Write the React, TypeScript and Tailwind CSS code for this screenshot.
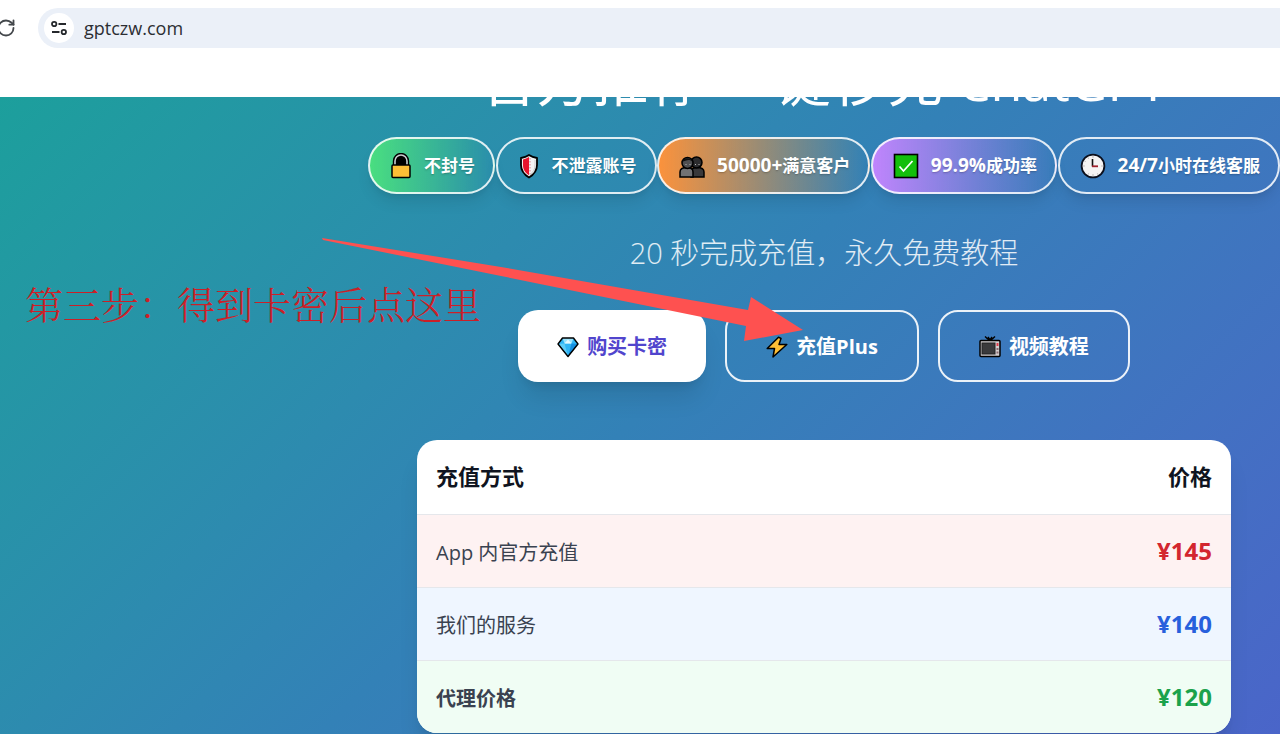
import { RotateCw } from "lucide-react";
import type { ReactNode } from "react";

const LockIcon = () => (
  <svg viewBox="0 0 22 26" className="h-[26px] w-[22px]" aria-hidden="true">
    <path d="M4 12V8a7 7 0 0 1 14 0v4z" fill="#000" stroke="#000" strokeWidth="2.4" />
    <path d="M5 12V8a6 6 0 0 1 12 0v4" fill="none" stroke="#c9cdd0" strokeWidth="1.6" />
    <rect x="2" y="12" width="18" height="12.5" rx="1" fill="#fdbf36" stroke="#000" strokeWidth="1.5" />
  </svg>
);

const ShieldIcon = () => (
  <svg viewBox="0 0 22 26" className="h-[26px] w-[22px]" aria-hidden="true">
    <path d="M11 2c3 2 5 2.500 8 3v7c0 6-3 9.500-8 12.500C6 21.500 3 18 3 12V5c3-.5 5-1 8-3z" fill="#f3f3f3" stroke="#000" strokeWidth="1.800" strokeLinejoin="round" />
    <path d="M11 4c-2 1.300-4 2-6 2.500V12c0 5 2.300 7.800 6 10.200z" fill="#e8152d" />
    <path d="M12 5v17" stroke="#d9828b" strokeWidth="1" strokeDasharray="1.500 1.500" />
    <path d="M17 7v5c0 4-1.500 7-5 9.500" fill="none" stroke="#c9c9c9" strokeWidth="1" />
  </svg>
);

const PeopleIcon = () => (
  <svg viewBox="0 0 26 26" className="size-[26px]" aria-hidden="true">
    <g stroke="#000" strokeWidth="1.500">
      <path d="M12 24v-5c0-3 2-4.500 6-4.500s7 1.500 7 4.500v5z" fill="#39393b" />
      <circle cx="17.500" cy="9.500" r="5.500" fill="#2c2c2e" />
      <path d="M1 24v-5c0-3 2-4.500 7-4.500 4 0 6 1.500 6 4.500v5z" fill="#727274" />
      <circle cx="8.500" cy="10" r="5.500" fill="#4f4f51" />
    </g>
    <path d="M3 9c1-5 9-5 11 0-2-1.500-3-2-4.500-2S5 8 3 9z" fill="#111" />
    <path d="M7 11v1M11 11v1M16.500 11v1M20 11v1" stroke="#bbb" />
  </svg>
);

const CheckIcon = () => (
  <svg viewBox="0 0 26 26" className="size-[26px]" aria-hidden="true">
    <rect x="1.500" y="1.500" width="23" height="23" fill="#13bf0c" stroke="#000" strokeWidth="1.600" />
    <path d="m6.500 13.500 4 4.500 9-10" fill="none" stroke="#fff" strokeWidth="1.800" />
  </svg>
);

const ClockIcon = () => (
  <svg viewBox="0 0 26 26" className="size-[26px]" aria-hidden="true">
    <circle cx="13" cy="13" r="11.400" fill="#f5f3f3" stroke="#0b0f1c" strokeWidth="1.800" />
    <g fill="#b9b5b5">
      <circle cx="13" cy="4" r=".8" />
      <circle cx="22" cy="13" r=".8" />
      <circle cx="13" cy="22" r=".8" />
      <circle cx="4" cy="13" r=".8" />
      <circle cx="17.500" cy="20.800" r=".6" />
      <circle cx="8.500" cy="20.800" r=".6" />
      <circle cx="8.500" cy="5.200" r=".6" />
      <circle cx="5.200" cy="8.500" r=".6" />
    </g>
    <path d="M12.500 6v7.500" stroke="#111" strokeWidth="1.600" />
    <path d="M12 13.300h6" stroke="#a0202c" strokeWidth="1.800" />
  </svg>
);

const GemIcon = () => (
  <svg viewBox="0 0 22 22" className="size-[22px]" aria-hidden="true">
    <path d="M5.500 2h11L21 8 11 20.500 1 8z" fill="#2fb5f5" />
    <path d="M5.500 2h11l-2 5.500h-7z" fill="#9be3fc" />
    <path d="M7.500 7.500 11 3.500l3.500 4z" fill="#e6f9ff" />
    <path d="m1 8 6.500-.5L11 20.500z" fill="#5dcdf9" />
    <path d="m21 8-6.500-.5L11 20.500z" fill="#168fe0" />
    <path d="M5.500 2h11L21 8 11 20.500 1 8z" fill="none" stroke="#000" strokeWidth="1.400" strokeLinejoin="round" />
  </svg>
);

const BoltIcon = () => (
  <svg viewBox="0 0 22 22" className="size-[22px]" aria-hidden="true">
    <path d="M12.500 1.200 1.200 12.500h7.300L7 21 20.800 8.500H13l2-6z" fill="#fdbf36" stroke="#000" strokeWidth="1.500" strokeLinejoin="round" />
  </svg>
);

const TvIcon = () => (
  <svg viewBox="0 0 22 22" className="size-[22px]" aria-hidden="true">
    <path d="m6 .5 5 4.500 5-4.500M9 1l2 3 2-3" fill="none" stroke="#000" strokeWidth="1.400" />
    <rect x="1" y="4.500" width="20" height="16" rx="1" fill="#d3cfd0" stroke="#000" strokeWidth="1.500" />
    <rect x="3" y="7" width="13" height="11" fill="#3a3a3c" stroke="#222" />
    <path d="M18.500 7v3" stroke="#e23a4a" strokeWidth="2" />
    <path d="M18.500 12v2M18.500 15.500v2" stroke="#8a6a70" strokeWidth="2" />
  </svg>
);

type Badge = { icon: ReactNode; latin?: string; text: string; tint: string };

const badges: Badge[] = [
  { icon: <LockIcon />, text: "不封号", tint: "bg-linear-to-r from-[#4ade80] to-transparent" },
  { icon: <ShieldIcon />, text: "不泄露账号", tint: "" },
  { icon: <PeopleIcon />, latin: "50000+", text: "满意客户", tint: "bg-linear-to-r from-[#fb923c] to-transparent" },
  { icon: <CheckIcon />, latin: "99.9%", text: "成功率", tint: "bg-linear-to-r from-[#c084fc] to-transparent" },
  { icon: <ClockIcon />, latin: "24/7", text: "小时在线客服", tint: "" },
];

const prices = [
  { name: "App 内官方充值", price: "¥145", row: "bg-[#fef2f2]", label: "font-normal", color: "text-[#d3262f]" },
  { name: "我们的服务", price: "¥140", row: "bg-[#eff6ff]", label: "font-normal", color: "text-[#2760dc]" },
  { name: "代理价格", price: "¥120", row: "bg-[#f0fdf4]", label: "font-bold", color: "text-[#1ba24b]" },
];

const AddressBar = () => (
  <header className="flex h-[97px] items-start overflow-hidden bg-white pt-2">
    <button type="button" aria-label="刷新" className="-ml-1 flex h-10 w-[42px] shrink-0 items-center text-[#43474b]">
      <RotateCw size={20} strokeWidth={2.2} />
    </button>
    <div className="flex h-10 min-w-0 flex-1 items-center gap-2.5 rounded-l-full bg-[#ebf0f8] pl-1.5">
      <button type="button" aria-label="网站信息" className="flex size-[30px] shrink-0 items-center justify-center rounded-full bg-white">
        <svg viewBox="0 0 16 16" className="size-4" fill="none" stroke="#25282c" strokeWidth="1.800">
          <circle cx="3.200" cy="4" r="2.200" />
          <path d="M7.500 4H15M1 12h7.500" />
          <circle cx="12.800" cy="12" r="2.200" />
        </svg>
      </button>
      <input
        type="text"
        aria-label="地址"
        defaultValue="gptczw.com"
        className="min-w-0 flex-1 bg-transparent text-lg text-[#2b2e33] outline-none"
      />
    </div>
  </header>
);

const Hero = () => (
  <div className="flex flex-col items-center whitespace-nowrap text-white">
    <h1 className="-mt-12 text-[56px] leading-[60px] font-normal">
      官方推荐 一键秒充 <span className="text-[52px] leading-none">ChatGPT</span>
    </h1>
    <ul className="mt-7 flex w-full justify-between">
      {badges.map((badge) => (
        <li
          key={badge.text}
          className={`flex h-[57px] items-center gap-3 rounded-full border-2 border-white/85 pr-[18px] pl-5 text-[17px] font-bold shadow-lg text-shadow-sm ${badge.tint}`}
        >
          {badge.icon}
          <span>
            {badge.latin && <span className="text-[19px]">{badge.latin}</span>}
            {badge.text}
          </span>
        </li>
      ))}
    </ul>
    <p className="mt-10 text-[29px] leading-[38px] font-light text-white/85">20 秒完成充值，永久免费教程</p>
    <div className="mt-[38px] flex gap-[19px] text-xl font-bold">
      <button type="button" className="flex h-[72px] items-center gap-2 rounded-[20px] bg-white px-[39px] pt-0.5 text-[#5145cd] shadow-xl">
        <GemIcon />
        购买卡密
      </button>
      <button type="button" className="flex h-[72px] items-center gap-2 rounded-[20px] border-2 border-white/90 px-[39px] pt-0.5">
        <BoltIcon />
        充值Plus
      </button>
      <button type="button" className="flex h-[72px] items-center gap-2 rounded-[20px] border-2 border-white/90 px-[39px] pt-0.5">
        <TvIcon />
        视频教程
      </button>
    </div>
  </div>
);

const PriceTable = () => (
  <div className="mx-[49px] mt-[58px] overflow-hidden rounded-[20px] bg-white shadow-xl">
    <table className="w-full text-xl text-[#3a4250]">
      <thead>
        <tr className="h-[74px] border-b border-gray-200 text-[22px] text-[#0f1420]">
          <th scope="col" className="px-[19px] text-left font-bold">充值方式</th>
          <th scope="col" className="px-[19px] text-right font-bold">价格</th>
        </tr>
      </thead>
      <tbody>
        {prices.map((item) => (
          <tr key={item.name} className={`h-[73px] border-b border-gray-200 last:border-b-0 ${item.row}`}>
            <td className={`px-[19px] pt-1 ${item.label}`}>{item.name}</td>
            <td className={`px-[19px] text-right text-2xl font-bold ${item.color}`}>{item.price}</td>
          </tr>
        ))}
      </tbody>
    </table>
  </div>
);

// Hand-drawn note and arrow that float above the page
const StepNote = () => (
  <>
    <p className="absolute top-[181px] left-[25px] font-['Noto_Serif_CJK_SC','Noto_Sans_CJK_SC',serif] text-[38px] leading-[50px] font-light whitespace-nowrap text-[#cc1f27]">
      第三步：得到卡密后点这里
    </p>
    <svg viewBox="0 0 484 106" className="pointer-events-none absolute top-[140px] left-[321px] h-[106px] w-[484px]" aria-hidden="true">
      <path d="M1 1 180 30 427 73 430 60 482 93 423 104 425 89 180 39 2 3z" fill="#fe5150" />
    </svg>
  </>
);

export default function App() {
  return (
    <div className="flex min-h-screen flex-col font-['Open_Sans','Noto_Sans_CJK_SC',sans-serif]">
      <AddressBar />
      <main className="relative flex-1 overflow-hidden bg-linear-135 from-[#1c9f9c] via-[#3381b7] via-50% to-[#4a65c9] pl-[368px]">
        <Hero />
        <PriceTable />
        <StepNote />
      </main>
    </div>
  );
}
